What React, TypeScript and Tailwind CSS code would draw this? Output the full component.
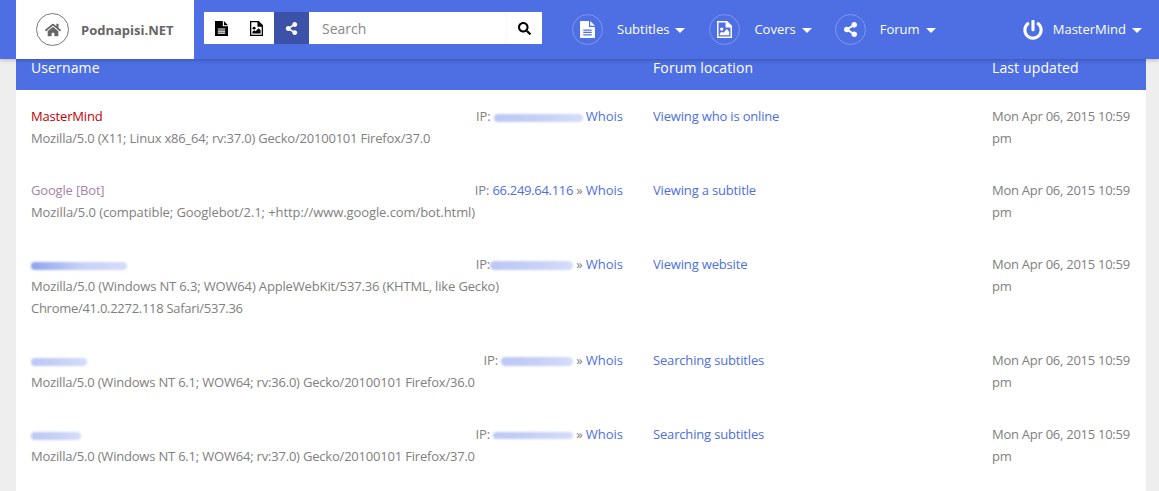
import React from 'react';
import { FaHome, FaPowerOff, FaSearch, FaShareAlt } from 'react-icons/fa';

const Blob = ({ className, from = 'from-[#bcc8f5]' }: { className: string; from?: string }) => (
  <span className={`inline-block align-middle rounded-full bg-linear-to-r ${from} via-[#c6d0f6] to-[#d5ddf9] blur-[1.2px] ${className}`} />
);

const Caret = () => (
  <span className="ml-[6px] mt-[1px] h-0 w-0 border-x-[5px] border-t-[5px] border-x-transparent border-t-white" />
);

const FileText = ({ className }: { className: string }) => (
  <svg viewBox="0 0 14 16" className={className} fill="currentColor">
    <path d="M9.6 0 14 4.4H9.6Z" />
    <path fillRule="evenodd" d="M0 0H8.4V5.6H14V16H0ZM3 8V9.2H11V8ZM3 10.2V11.4H11V10.2ZM3 12.4V13.6H11V12.4Z" />
  </svg>
);

const FileImage = ({ className }: { className: string }) => (
  <svg viewBox="0 0 14 16" className={className} fill="currentColor">
    <path fillRule="evenodd" d="M0 0H9.5L14 4.5V16H0ZM1.4 1.4V14.6H12.6V6H8V1.4Z" />
    <circle cx="4.4" cy="7.6" r="1.6" />
    <path d="M2.6 13.4V11.6L4.6 10 6 11 9.2 7.6 11.4 10V13.4Z" />
  </svg>
);

const NavItem = ({ icon, label, className }: { icon: React.ReactNode; label: string; className: string }) => (
  <div className={`mt-[3px] flex items-center ${className}`}>
    <span className="flex h-[31px] w-[31px] items-center justify-center rounded-full border border-[#7f97ec] text-white">
      {icon}
    </span>
    <span className="mb-[2px] ml-[14px] text-[13px] text-white">{label}</span>
    <Caret />
  </div>
);

const rows = [
  {
    name: <span className="text-[#c40000]">MasterMind</span>,
    agent: [{ text: 'Mozilla/5.0 (X11; Linux x86_64; rv:37.0) Gecko/20100101 Firefox/37.0', fit: 'tracking-[-0.2px]' }],
    ip: <><span>IP: </span><Blob className="h-[8px] w-[89px]" /></>,
    location: 'Viewing who is online',
  },
  {
    name: <span className="text-[#a583a8]">Google [Bot]</span>,
    agent: [{ text: 'Mozilla/5.0 (compatible; Googlebot/2.1; +http://www.google.com/bot.html)', fit: 'tracking-[-0.08px]' }],
    ip: <><span>IP: </span><span className="tracking-[-0.3px] text-[#4d6fe3]">66.249.64.116</span><span> »</span></>,
    location: 'Viewing a subtitle',
  },
  {
    name: <Blob className="h-[8px] w-[96px]" from="from-[#8ea3ec]" />,
    agent: [
      { text: 'Mozilla/5.0 (Windows NT 6.3; WOW64) AppleWebKit/537.36 (KHTML, like Gecko)', fit: 'tracking-[-0.15px]' },
      { text: 'Chrome/41.0.2272.118 Safari/537.36', fit: 'tracking-[-0.28px]' },
    ],
    ip: <><span>IP:</span><Blob className="h-[9px] w-[83px]" /><span> »</span></>,
    location: 'Viewing website',
  },
  {
    name: <Blob className="h-[8px] w-[56px]" />,
    agent: [{ text: 'Mozilla/5.0 (Windows NT 6.1; WOW64; rv:36.0) Gecko/20100101 Firefox/36.0', fit: 'tracking-[-0.2px]' }],
    ip: <><span>IP: </span><Blob className="h-[9px] w-[72px]" /><span> »</span></>,
    location: 'Searching subtitles',
  },
  {
    name: <Blob className="h-[8px] w-[50px]" />,
    agent: [{ text: 'Mozilla/5.0 (Windows NT 6.1; WOW64; rv:37.0) Gecko/20100101 Firefox/37.0', fit: 'tracking-[-0.2px]' }],
    ip: <><span>IP: </span><Blob className="h-[7px] w-[80px]" /><span> »</span></>,
    location: 'Searching subtitles',
  },
];

export default function App() {
  return (
    <div className="flex h-[491px] flex-col overflow-hidden bg-[#eeeeee] font-['Open_Sans','Noto_Sans',sans-serif] text-[13px] leading-[22px] text-[#808080]">
      <header className="relative z-10 flex h-[59px] shrink-0 items-center bg-[#4d6fe3] pb-[3px] pl-[16px] shadow-[0_1px_4px_rgba(0,0,0,0.25)]">
        <div className="-mb-[3px] flex h-[59px] w-[178px] items-center bg-white pl-[20px]">
          <span className="flex h-[33px] w-[33px] items-center justify-center rounded-full border border-[#777] text-[#666]">
            <FaHome size={16} />
          </span>
          <span className="ml-[12px] text-[13px] font-bold text-[#666]">Podnapisi.NET</span>
        </div>
        <div className="ml-[10px] flex h-[32px] w-[338px] bg-white">
          <span className="flex w-[35px] items-center justify-center text-black"><FileText className="h-[15px] w-[13px]" /></span>
          <span className="flex w-[35px] items-center justify-center text-black"><FileImage className="h-[15px] w-[13px]" /></span>
          <span className="flex w-[35px] items-center justify-center bg-[#3b52a8] text-white"><FaShareAlt size={13} /></span>
          <span className="flex-1 pl-[13px] pt-px text-[14px] leading-[32px] text-[#888]">Search</span>
          <span className="flex w-[36px] items-center justify-center border-l border-[#f8f8f8] text-black"><FaSearch size={13} /></span>
        </div>
        <NavItem className="ml-[30px]" icon={<FileText className="h-[17px] w-[15px]" />} label="Subtitles" />
        <NavItem className="ml-[24px]" icon={<FileImage className="h-[17px] w-[15px]" />} label="Covers" />
        <NavItem className="ml-[23px]" icon={<FaShareAlt size={15} />} label="Forum" />
        <div className="ml-auto mt-[3px] flex items-center pr-[17px]">
          <FaPowerOff className="text-white" size={20} />
          <span className="mb-[2px] ml-[10px] text-[13px] text-white">MasterMind</span>
          <Caret />
        </div>
      </header>

      <main className="ml-[16px] mr-[13px] flex-1 bg-white tracking-[-0.17px]">
        <div className="flex h-[31px] bg-[#4d6fe3] text-[14px] leading-[18px] tracking-[0.12px] text-white">
          <div className="w-[622px] px-[15px]">Username</div>
          <div className="w-[339px] px-[15px]">Forum location</div>
          <div className="w-[169px] px-[15px]">Last updated</div>
        </div>
        {rows.map((row) => (
          <div key={row.location + row.agent[0].text} className="flex py-[15px]">
            <div className="w-[622px] px-[15px]">
              <div className="flex justify-between">
                <div>{row.name}</div>
                <div>
                  {row.ip} <span className="tracking-[-0.02px] text-[#4d6fe3]">Whois</span>
                </div>
              </div>
              {row.agent.map((line) => (
                <div key={line.text} className={line.fit}>{line.text}</div>
              ))}
            </div>
            <div className="w-[339px] px-[15px] text-[#4d6fe3]">{row.location}</div>
            <div className="w-[169px] pl-[15px] pr-[10px] tracking-[-0.26px]">Mon Apr 06, 2015 10:59 pm</div>
          </div>
        ))}
      </main>
    </div>
  );
}
